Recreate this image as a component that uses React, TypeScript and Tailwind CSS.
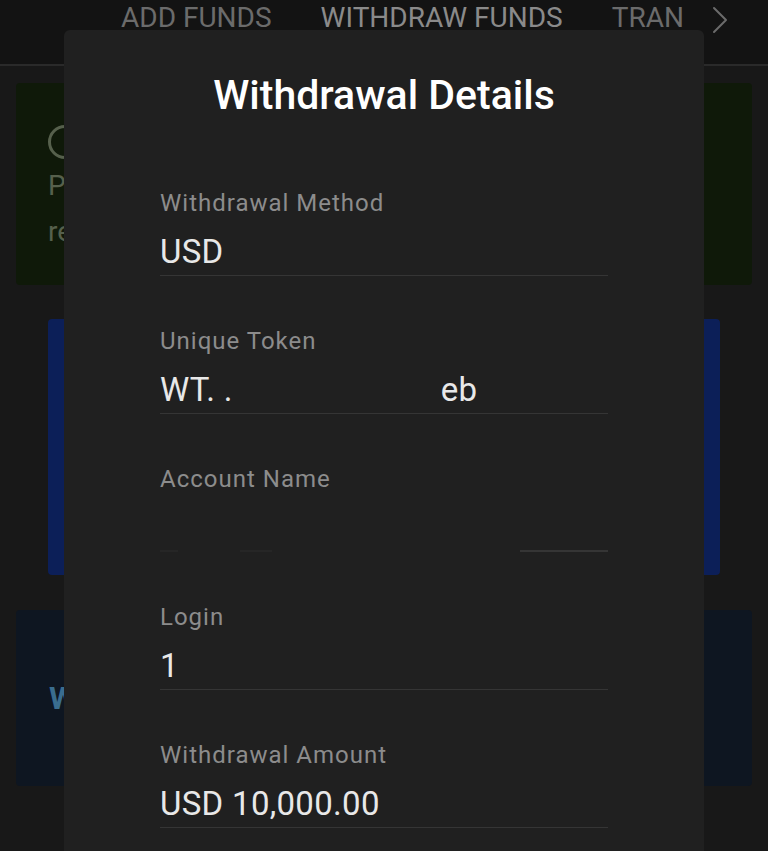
const font = { fontFamily: "Roboto, 'Noto Sans', sans-serif" };

function Field({ label, children }: { label: string; children?: React.ReactNode }) {
  return (
    <div className="flex h-[138px] flex-col">
      <div className="mt-[50px] h-[30px] text-[24px] leading-[30px] tracking-[1px] text-[#8c8c8c]">{label}</div>
      <div className="mt-[17px] h-[34px] text-[33px] leading-[34px] tracking-[0.3px] text-[#e8e8e8]">{children}</div>
      <div className="mt-[6px] h-[2px] bg-[#353535]" />
    </div>
  );
}

export default function App() {
  return (
    <div className="relative h-[851px] w-[768px] overflow-hidden bg-[#181818]" style={font}>
      {/* page behind the dialog */}
      <div className="flex h-[66px] items-start border-b-2 border-[#2a2a2a] bg-[#131313] pl-[121px] pt-[1px]">
        <div className="flex items-center gap-[49px] text-[28px] leading-[34px] text-[#6b6b6b]">
          <span>ADD FUNDS</span>
          <span className="text-[#8a8a8a]">WITHDRAW FUNDS</span>
          <span className="w-[64px] whitespace-nowrap">TRAN</span>
        </div>
        <svg className="ml-[35px] mt-[5px]" width="18" height="28" viewBox="0 0 18 28" fill="none">
          <path d="M3 2 L15 14 L3 26" stroke="#6b6b6b" strokeWidth="2" strokeLinecap="round" strokeLinejoin="round" />
        </svg>
      </div>

      <div className="flex flex-col px-[16px]">
        <div className="mt-[17px] h-[202px] rounded-[4px] bg-[#0f1909] px-[32px] pt-[42px] text-[28px] leading-[46px] text-[#56604c]">
          <div className="h-[34px] w-[34px] rounded-full border-[3px] border-[#56604c]" />
          <div className="mt-[4px]">P</div>
          <div>re</div>
        </div>

        <div className="mx-[32px] mt-[34px] h-[256px] rounded-[4px] bg-[#0c1f58]" />

        <div className="mt-[35px] flex h-[176px] items-center rounded-[4px] bg-[#0e1621] px-[33px] text-[32px] font-bold text-[#3a6d8f]">
          <span>W</span>
        </div>
      </div>

      {/* dialog */}
      <div className="absolute left-[64px] top-[30px] h-[840px] w-[640px] rounded-t-[6px] bg-[#202020] px-[96px]">
        <div className="pt-[42px] text-center text-[41px] font-medium leading-[46px] text-white">Withdrawal Details</div>
        <div className="mt-[20px]">
          <Field label="Withdrawal Method">USD</Field>
          <Field label="Unique Token">
            <span className="flex">
              <span>WT. .</span>
              <span className="ml-[208px]">eb</span>
            </span>
          </Field>
          <div className="flex h-[138px] flex-col">
            <div className="mt-[50px] h-[30px] text-[24px] leading-[30px] tracking-[1px] text-[#8c8c8c]">Account Name</div>
            <div className="mt-[17px] h-[34px]" />
            <div className="mt-[6px] flex h-[2px]">
              <div className="w-[18px] bg-[#262626]" />
              <div className="ml-[62px] w-[32px] bg-[#262626]" />
              <div className="ml-auto w-[88px] bg-[#353535]" />
            </div>
          </div>
          <Field label="Login">1</Field>
          <Field label="Withdrawal Amount">USD 10,000.00</Field>
        </div>
      </div>
    </div>
  );
}
